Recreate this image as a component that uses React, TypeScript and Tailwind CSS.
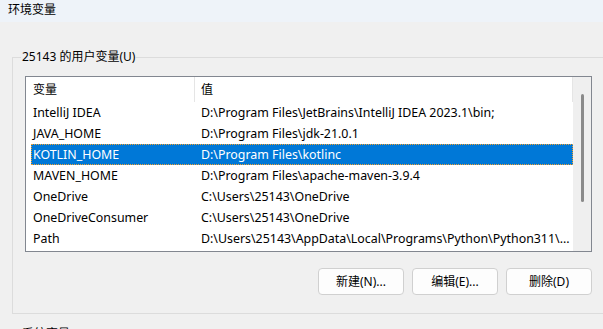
import React from "react";

const rows: [string, string][] = [
  ["IntelliJ IDEA", "D:\\Program Files\\JetBrains\\IntelliJ IDEA 2023.1\\bin;"],
  ["JAVA_HOME", "D:\\Program Files\\jdk-21.0.1"],
  ["KOTLIN_HOME", "D:\\Program Files\\kotlinc"],
  ["MAVEN_HOME", "D:\\Program Files\\apache-maven-3.9.4"],
  ["OneDrive", "C:\\Users\\25143\\OneDrive"],
  ["OneDriveConsumer", "C:\\Users\\25143\\OneDrive"],
  ["Path", "D:\\Users\\25143\\AppData\\Local\\Programs\\Python\\Python311\\..."],
];

const font = { fontFamily: '"Noto Sans", "Noto Sans CJK SC", sans-serif' };

export default function App() {
  return (
    <div className="w-[603px] h-[329px] overflow-hidden bg-[#f0f0f0] text-[12px] text-black leading-[16px]" style={font}>
      <div className="h-[22px] bg-[#eef3f9] pl-[8px] pt-[2px] text-[12px]">环境变量</div>
      <fieldset className="ml-[12px] mt-[27px] w-[620px] border border-[#dcdcdc] pb-[18px]">
        <legend className="ml-[8px] px-[1px]">25143 的用户变量(U)</legend>
        <div className="pl-[12px]">
          <div className="mt-[11px] w-[567px] h-[176px] border border-[#828790] bg-white flex">
            <div className="w-[547px] flex flex-col">
              <div className="h-[25px] flex">
                <div className="w-[169px] border-r border-[#e5e5e5] pl-[7px] flex items-center">变量</div>
                <div className="w-[378px] border-r border-[#e5e5e5] pl-[6px] flex items-center">值</div>
              </div>
              {rows.map(([k, v], i) => {
                const sel = i === 2;
                return (
                  <div
                    key={k}
                    className={
                      "ml-[5px] h-[21px] flex items-center text-[12.4px] " +
                      (sel ? "bg-[#0078d7] text-white outline outline-1 outline-dotted outline-offset-[-1px] outline-[#f0a030]" : "")
                    }
                  >
                    <div className="w-[168px] pl-[2px] whitespace-nowrap">{k}</div>
                    <div className="pl-[2px] whitespace-nowrap">{v}</div>
                  </div>
                );
              })}
            </div>
            <div className="w-[18px] bg-[#efefef] flex justify-center pt-[17px] pl-[1px]">
              <div className="w-[3px] h-[108px] rounded-full bg-[#8a8a8a]" />
            </div>
          </div>
          <div className="mt-[16px] w-[567px] flex justify-end gap-[8px]">
            {["新建(N)...", "编辑(E)...", "删除(D)"].map((t) => (
              <button
                key={t}
                className="w-[86px] h-[27px] rounded-[4px] border border-[#d0d0d0] bg-[#fdfdfd] text-[12px] flex items-center justify-center"
              >
                {t}
              </button>
            ))}
          </div>
        </div>
      </fieldset>
      <fieldset className="ml-[12px] mt-[12px] w-[620px] h-[40px] border border-[#dcdcdc]">
        <legend className="ml-[8px] px-[1px]">系统变量(S)</legend>
      </fieldset>
    </div>
  );
}
